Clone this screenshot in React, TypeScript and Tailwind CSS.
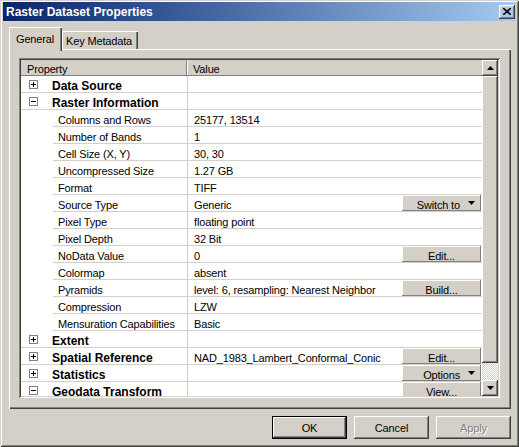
import React from "react";

type Row = {
  label: string;
  value?: string;
  cat?: "plus" | "minus";
  button?: string;
  drop?: boolean;
};

const rows: Row[] = [
  { label: "Data Source", cat: "plus" },
  { label: "Raster Information", cat: "minus" },
  { label: "Columns and Rows", value: "25177, 13514" },
  { label: "Number of Bands", value: "1" },
  { label: "Cell Size (X, Y)", value: "30, 30" },
  { label: "Uncompressed Size", value: "1.27 GB" },
  { label: "Format", value: "TIFF" },
  { label: "Source Type", value: "Generic", button: "Switch to", drop: true },
  { label: "Pixel Type", value: "floating point" },
  { label: "Pixel Depth", value: "32 Bit" },
  { label: "NoData Value", value: "0", button: "Edit..." },
  { label: "Colormap", value: "absent" },
  { label: "Pyramids", value: "level: 6, resampling: Nearest Neighbor", button: "Build..." },
  { label: "Compression", value: "LZW" },
  { label: "Mensuration Capabilities", value: "Basic" },
  { label: "Extent", cat: "plus" },
  { label: "Spatial Reference", cat: "plus", value: "NAD_1983_Lambert_Conformal_Conic", button: "Edit..." },
  { label: "Statistics", cat: "plus", button: "Options", drop: true },
  { label: "Geodata Transform", cat: "minus", button: "View..." },
];

const raised =
  "shadow-[inset_-1px_-1px_#404040,inset_1px_1px_#ffffff,inset_-2px_-2px_#808080,inset_2px_2px_#d4d0c8]";

function ExpandBox({ open }: { open: boolean }) {
  return (
    <svg width="9" height="9" viewBox="0 0 9 9" className="shrink-0">
      <rect x="0.5" y="0.5" width="8" height="8" fill="#fff" stroke="#808080" />
      <path d="M2 4.5h5" stroke="#000" />
      {!open && <path d="M4.5 2v5" stroke="#000" />}
    </svg>
  );
}

function Arrow({ up }: { up?: boolean }) {
  return (
    <svg width="7" height="4" viewBox="0 0 7 4" className="shrink-0">
      <polygon points={up ? "3.5,0 7,4 0,4" : "0,0 7,0 3.5,4"} fill="#000" />
    </svg>
  );
}

function CellButton({ label, drop }: { label: string; drop?: boolean }) {
  return (
    <div
      className={`mr-[1px] flex h-full w-[79px] shrink-0 items-center bg-[#d4d0c8] shadow-[inset_-1px_-1px_#808080,inset_1px_1px_#ffffff] ${
        drop ? "justify-end gap-[8px] pr-[6px]" : "justify-center"
      }`}
    >
      <span className="h-[16px] pt-[4px] leading-[12px]">{label}</span>
      {drop && <Arrow />}
    </div>
  );
}

function PropRow({ row }: { row: Row }) {
  return (
    <div className={`flex h-[17px] shrink-0 border-b border-[#d4d0c8] ${row.cat ? "" : "ml-[32px]"}`}>
      <div
        className={`flex h-full items-center border-r border-[#d4d0c8] ${
          row.cat ? "w-[167px] pl-[8px]" : "w-[135px] pl-[5px]"
        }`}
      >
        {row.cat && <ExpandBox open={row.cat === "minus"} />}
        <span
          className={`h-[16px] whitespace-nowrap pt-[4px] leading-[12px] ${
            row.cat ? "ml-[14px] text-[12px] font-bold tracking-normal" : ""
          }`}
        >
          {row.label}
        </span>
      </div>
      <div className="flex h-full flex-1 items-center pl-[6px]">
        <span className="h-[16px] flex-1 whitespace-nowrap pt-[4px] leading-[12px]">{row.value}</span>
        {row.button && <CellButton label={row.button} drop={row.drop} />}
      </div>
    </div>
  );
}

function WinButton({ label, def, disabled }: { label: string; def?: boolean; disabled?: boolean }) {
  return (
    <div
      className={`flex h-[23px] w-[75px] items-center justify-center bg-[#d4d0c8] ${
        def
          ? "border border-black shadow-[inset_-1px_-1px_#404040,inset_1px_1px_#ffffff,inset_-2px_-2px_#808080]"
          : raised
      } ${disabled ? "text-[#808080] [text-shadow:1px_1px_#ffffff]" : ""}`}
    >
      {label}
    </div>
  );
}

export default function App() {
  return (
    <div
      className="flex h-[447px] w-[519px] flex-col bg-[#d4d0c8] px-[3px] pt-[2px] text-[11px] leading-[14px] tracking-[-0.15px] text-black shadow-[inset_1px_1px_#d4d0c8,inset_-1px_-1px_#404040,inset_2px_2px_#ffffff,inset_-2px_-2px_#808080]"
      style={{ fontFamily: '"Liberation Sans", Arial, sans-serif' }}
    >
      {/* caption */}
      <div className="flex h-[19px] items-center justify-between bg-linear-to-r from-[#0a246a] to-[#a6caf0] pl-[3px] pr-[1px]">
        <span className="text-[12px] font-bold tracking-normal text-white">Raster Dataset Properties</span>
        <div className={`flex h-[14px] w-[16px] items-center justify-center ${raised}`}>
          <svg width="8" height="7" viewBox="0 0 8 7">
            <path d="M0 0l8 7M8 0L0 7" stroke="#000" strokeWidth="1.6" />
          </svg>
        </div>
      </div>

      <div className="ml-[6px] mt-[6px] w-[502px]">
        {/* tabs */}
        <div className="flex h-[22px] items-end">
          <div className="relative z-10 -mb-[2px] h-[24px] w-[53px] bg-[#d4d0c8] pl-[7px] pt-[5px] shadow-[inset_1px_1px_#ffffff,inset_-1px_0_#404040,inset_-2px_0_#808080]">
            General
          </div>
          <div className="h-[18px] w-[76px] pl-[4px] pt-[3px] shadow-[inset_1px_1px_#ffffff,inset_-1px_0_#404040,inset_-2px_0_#808080]">
            Key Metadata
          </div>
        </div>

        {/* panel */}
        <div className="h-[360px] w-[502px] pl-[10px] pt-[9px] shadow-[inset_1px_1px_#ffffff,inset_-1px_-1px_#404040,inset_-2px_-2px_#808080]">
          <div className="flex h-[340px] w-[481px] p-[2px] shadow-[inset_1px_1px_#808080,inset_-1px_-1px_#ffffff,inset_2px_2px_#404040,inset_-2px_-2px_#d4d0c8]">
            <div className="flex h-full w-[461px] flex-col overflow-hidden bg-white">
              <div className="flex h-[16px] shrink-0 border-b border-[#808080] bg-[#d4d0c8]">
                <div className="w-[166px] border-r border-[#808080] pl-[6px] pt-[3px] leading-[12px]">Property</div>
                <div className="flex-1 border-l border-white pl-[5px] pt-[3px] leading-[12px]">Value</div>
              </div>
              {rows.map((r) => (
                <PropRow key={r.label} row={r} />
              ))}
            </div>

            {/* scrollbar */}
            <div className="flex h-full w-[16px] flex-col">
              <div className={`flex h-[16px] shrink-0 items-center justify-center ${raised}`}>
                <Arrow up />
              </div>
              <div className={`h-[287px] shrink-0 bg-[#d4d0c8] ${raised}`} />
              <div className="flex-1 bg-[repeating-conic-gradient(#ffffff_0_25%,#d4d0c8_0_50%)] bg-[length:2px_2px]" />
              <div className={`flex h-[16px] shrink-0 items-center justify-center ${raised}`}>
                <Arrow />
              </div>
            </div>
          </div>
        </div>

        {/* dialog buttons */}
        <div className="mt-[7px] flex justify-end gap-[7px]">
          <WinButton label="OK" def />
          <WinButton label="Cancel" />
          <WinButton label="Apply" disabled />
        </div>
      </div>
    </div>
  );
}
